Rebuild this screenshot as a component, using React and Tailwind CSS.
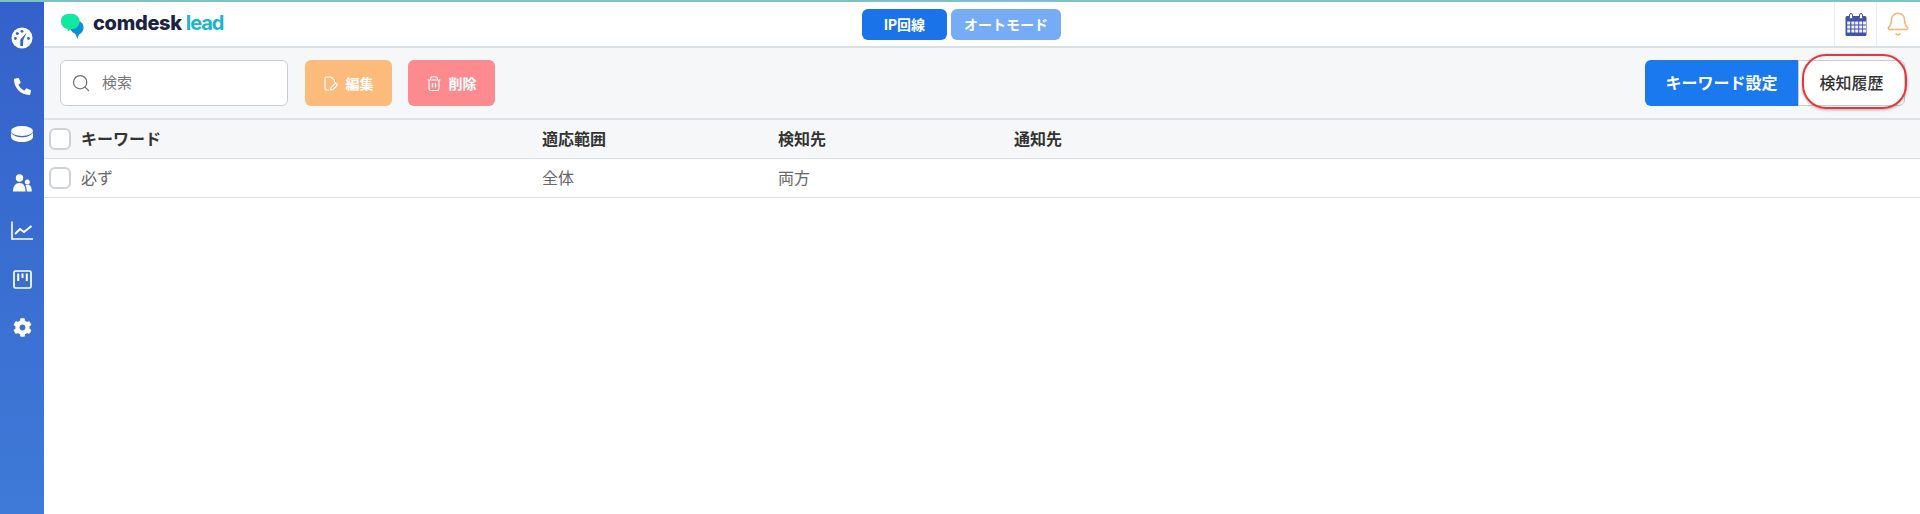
import React from "react";
import { Search, Bell } from "lucide-react";
import { FaPhoneAlt, FaCog } from "react-icons/fa";

const font = { fontFamily: '"Inter","Noto Sans CJK JP",sans-serif' };

function Gauge() {
  return (
    <svg width="22" height="22" viewBox="0 0 22 22">
      <circle cx="11" cy="11" r="10.500" fill="white" />
      <circle cx="6.300" cy="6.500" r="1.500" fill="#3563c9" />
      <circle cx="11" cy="4.300" r="1.400" fill="#3563c9" />
      <circle cx="4.400" cy="11.500" r="1.400" fill="#3563c9" />
      <circle cx="17.500" cy="11.500" r="1.400" fill="#3563c9" />
      <path d="M15.600 5.500 L12.300 13 L12 19 L9.300 19 L9.300 12.800 Z" fill="#3563c9" />
    </svg>
  );
}

function Disk() {
  return (
    <svg width="22" height="16" viewBox="0 0 22 16">
      <ellipse cx="11" cy="5" rx="11" ry="5" fill="white" />
      <path d="M0 6.500 C2 10 7 11.200 11 11.200 C15 11.200 20 10 22 6.500 V11 C22 14 16 16 11 16 C6 16 0 14 0 11 Z" fill="white" />
    </svg>
  );
}

function People() {
  return (
    <svg width="19" height="18" viewBox="0 0 19 18" fill="white">
      <circle cx="6.500" cy="4" r="3.700" />
      <path d="M0 17.500 C0 12 2.500 9 6.500 9 C10.500 9 12.500 12 12.500 17.500 Z" />
      <circle cx="14.300" cy="8" r="2.500" />
      <path d="M13.800 17.500 C13.800 14.500 13.300 12.500 12.300 11.700 C13 11 14 10.800 14.800 10.800 C17.500 10.800 18.800 13.500 18.800 17.500 Z" />
    </svg>
  );
}

function Chart() {
  return (
    <svg width="22" height="19" viewBox="0 0 22 19" fill="none" stroke="white" strokeWidth="1.600">
      <path d="M1 0.500V18H22" />
      <path d="M4 13L9 8L13 11L20.500 5" strokeWidth="2" />
    </svg>
  );
}

function Kanban() {
  return (
    <svg width="19" height="19" viewBox="0 0 19 19" fill="none">
      <rect x="1" y="1" width="17" height="17" rx="1.500" stroke="white" strokeWidth="1.700" />
      <path d="M5.200 3.500v7.500M9.500 3.500v4.500M13.800 3.500v7.500" stroke="white" strokeWidth="2" />
    </svg>
  );
}

function Logo() {
  return (
    <svg width="23" height="25" viewBox="0 0 23 25">
      <path d="M12 7h5a6 6 0 0 1 5.500 6v2a8 8 0 0 1-4.500 5.500L16.500 25 14.500 20C12 19 10 17 9.500 15z" fill="#0e8fd0" />
      <path d="M6 0h6a7 7 0 0 1 6.500 7.500 7 7 0 0 1-6.500 7.500H10L7 17.500 6.500 15A7.500 7.500 0 0 1 0 7.500 7 7 0 0 1 6 0z" fill="#12e8a0" />
    </svg>
  );
}

function EditIcon() {
  return (
    <svg width="14" height="15" viewBox="0 0 14 15" fill="none" stroke="white" strokeWidth="1.100">
      <path d="M5 14H2.500A1.500 1.500 0 0 1 1 12.500V2.500A1.500 1.500 0 0 1 2.500 1h4.500l3.500 3.500V6.500" />
      <path d="M6.500 14l.5-2.500 4.500-4.500 2 2-4.500 4.500z" />
    </svg>
  );
}

function TrashIcon() {
  return (
    <svg width="14" height="15" viewBox="0 0 14 15" fill="none" stroke="white" strokeWidth="1.100">
      <path d="M0.500 4H13.500" />
      <path d="M3.500 4V3A2.300 2.300 0 0 1 5.800 0.700H8.200A2.300 2.300 0 0 1 10.500 3V4" />
      <path d="M2 4V12.500A2 2 0 0 0 4 14.500H10A2 2 0 0 0 12 12.500V4" />
      <path d="M5.500 7V11.500M8.500 7V11.500" strokeWidth="1.300" />
    </svg>
  );
}

function CalendarIcon() {
  return (
    <svg width="22" height="23" viewBox="0 0 22 23">
      <rect x="0.500" y="3" width="21" height="20" rx="1.500" fill="#4252a8" />
      <g fill="white" opacity="0.92">
        {[8.500, 12.500, 16.500].map((y) =>
          [2.200, 6.400, 10.200, 14.200, 18].map((x) => (
            <rect key={x + "-" + y} x={x} y={y} width="3" height="3" />
          ))
        )}
      </g>
      <rect x="4.500" y="0.500" width="3" height="5.500" rx="1.500" fill="white" stroke="#4252a8" />
      <rect x="14.500" y="0.500" width="3" height="5.500" rx="1.500" fill="white" stroke="#4252a8" />
    </svg>
  );
}

function Checkbox() {
  return <div className="w-[22px] h-[22px] rounded-[6px] border-2 border-[#ccd1d6] bg-white shrink-0" />;
}

export default function App() {
  const side = [
    <Gauge />,
    <FaPhoneAlt size={17} />,
    <Disk />,
    <People />,
    <Chart />,
    <Kanban />,
    <FaCog size={19} />,
  ];
  return (
    <div className="w-[1920px] h-[514px] flex flex-col bg-white overflow-hidden" style={font}>
      <div className="h-[2px] bg-[#7fc1c9] shrink-0" />
      <div className="flex flex-1 min-h-0">
        <aside className="w-[44px] shrink-0 bg-gradient-to-b from-[#3461c9] to-[#3f7ad8] flex flex-col items-center pt-[12px] text-white">
          {side.map((icon, i) => (
            <div key={i} className="h-[48.200px] w-full shrink-0 flex items-center justify-center">{icon}</div>
          ))}
        </aside>
        <main className="flex-1 flex flex-col min-w-0">
          <header className="h-[46px] shrink-0 border-b-2 border-[#d8e0e4] flex items-stretch pl-[17px]">
            <div className="flex items-center gap-[9px] h-[44px] w-[801px] pt-[4px]">
              <Logo />
              <div className="text-[20px] font-extrabold leading-none tracking-[-0.3px] text-[#1a2340] flex gap-[4px] -mt-[6px]">
                <span>comdesk</span>
                <span className="text-[#1ab5c9] font-bold tracking-[-1.100px]">lead</span>
              </div>
            </div>
            <div className="flex gap-[4px] pt-[7px]">
              <button className="w-[85px] h-[31px] rounded-[6px] bg-[#1a73e8] text-white text-[14px] font-bold">IP回線</button>
              <button className="w-[110px] h-[31px] rounded-[6px] bg-[#76acf5] text-white text-[14px] font-bold">オートモード</button>
            </div>
            <div className="ml-auto flex">
              <div className="w-[42px] border-l border-[#e7eaec] flex items-center justify-center">
                <CalendarIcon />
              </div>
              <div className="w-[44px] border-l border-[#e7eaec] flex items-center justify-center pr-[2px]">
                <Bell size={26} strokeWidth={1.400} className="text-[#fbb272]" />
              </div>
            </div>
          </header>
          <div className="h-[72px] shrink-0 bg-[#f6f7f9] border-b-2 border-[#dfe3e6] flex items-center pl-[16px] pr-[15px] relative">
            <div className="w-[228px] h-[46px] rounded-[6px] border border-[#c8ccd0] bg-white flex items-center pl-[10px]">
              <Search size={20} strokeWidth={1.500} className="text-[#6f7478]" />
              <span className="ml-[11px] text-[15px] text-[#777]">検索</span>
            </div>
            <button className="ml-[17px] w-[87px] h-[46px] rounded-[6px] bg-[#fcbb7b] text-white text-[14px] font-bold flex items-center justify-center gap-[8px]">
              <EditIcon />編集
            </button>
            <button className="ml-[16px] w-[87px] h-[46px] rounded-[6px] bg-[#fd8a8f] text-white text-[14px] font-bold flex items-center justify-center gap-[8px]">
              <TrashIcon />削除
            </button>
            <div className="ml-auto flex">
              <button className="w-[153px] h-[46px] rounded-l-[6px] bg-[#1a79ee] text-white text-[16px] font-bold">キーワード設定</button>
              <button className="w-[107px] h-[46px] rounded-r-[6px] border border-[#c8ccd0] bg-white text-[#333] text-[16px] font-medium">検知履歴</button>
            </div>
            <div className="absolute right-[13px] top-[6px] w-[105px] h-[55px] rounded-[24px] border-2 border-[#e8343a] shadow-[0_1px_3px_rgba(0,0,0,0.3)]" />
          </div>
          <div className="h-[39px] shrink-0 bg-[#f6f7f9] border-b border-[#dcdfe2] grid grid-cols-[493px_236px_236px_1fr] items-center text-[16px] font-bold text-[#333] pl-[5px]">
            <div className="flex items-center gap-[10px]"><Checkbox />キーワード</div>
            <div>適応範囲</div>
            <div>検知先</div>
            <div>通知先</div>
          </div>
          <div className="h-[39px] shrink-0 border-b border-[#dcdfe2] grid grid-cols-[493px_236px_236px_1fr] items-center text-[16px] text-[#666] pl-[5px]">
            <div className="flex items-center gap-[10px]"><Checkbox />必ず</div>
            <div>全体</div>
            <div>両方</div>
            <div></div>
          </div>
        </main>
      </div>
    </div>
  );
}
